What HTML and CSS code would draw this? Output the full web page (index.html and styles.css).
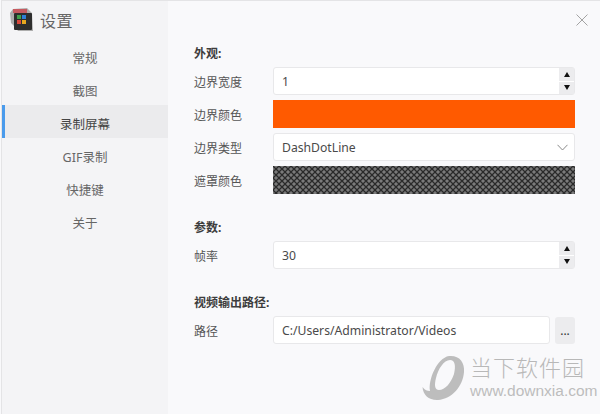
FILE: index.html
```html
<!DOCTYPE html>
<html lang="zh">
<head>
    <title>设置</title>
    <meta charset="UTF-8">
    <link rel="stylesheet" href="styles.css">
</head>
<body>
    <div class="window">
        <div class="sidebar">
            <div class="brand">
                <svg class="logo" width="24" height="24" viewBox="0 0 24 24">
                    <path d="M1 5 L4 1 L18 0 L23 5 L24 23 L9 23 L6 19 L2 15 Z" fill="#adadad"/>
                    <rect x="5" y="5" width="18" height="17" rx="1" fill="#2e2e2e"/>
                    <rect x="4" y="1" width="14" height="4" fill="#c65a60"/>
                    <rect x="8" y="7" width="4" height="4" fill="#3fa04a"/>
                    <rect x="13" y="7" width="4" height="4" fill="#2f7fd6"/>
                    <rect x="8" y="12" width="4" height="4" fill="#d8483c"/>
                    <rect x="13" y="12" width="4" height="4" fill="#e7a81f"/>
                </svg>
                <span class="brand-name">设置</span>
            </div>
            <div class="nav">
                <div class="nav-item">常规</div>
                <div class="nav-item">截图</div>
                <div class="nav-item active">录制屏幕</div>
                <div class="nav-item">GIF录制</div>
                <div class="nav-item">快捷键</div>
                <div class="nav-item">关于</div>
            </div>
        </div>
        <div class="main">
            <div class="close">
                <svg width="12" height="12" viewBox="0 0 12 12">
                    <path d="M0.5 0.500 L11.500 11.500 M11.500 0.500 L0.500 11.500" stroke="#a3a3a3" stroke-width="1" fill="none"/>
                </svg>
            </div>

            <div class="group first">
                <h6 class="group-title">外观:</h6>
                <div class="row">
                    <label class="label">边界宽度</label>
                    <div class="field">
                        <span class="value">1</span>
                        <div class="spin">
                            <span class="spin-btn"><i class="arrow up"></i></span>
                            <span class="spin-btn"><i class="arrow down"></i></span>
                        </div>
                    </div>
                </div>
                <div class="row">
                    <label class="label">边界颜色</label>
                    <div class="swatch orange"></div>
                </div>
                <div class="row">
                    <label class="label">边界类型</label>
                    <div class="field">
                        <span class="value">DashDotLine</span>
                        <svg class="chevron" width="11" height="7" viewBox="0 0 11 7">
                            <path d="M0.500 0.800 L5.500 6 L10.500 0.800" stroke="#8a8a8a" stroke-width="1" fill="none"/>
                        </svg>
                    </div>
                </div>
                <div class="row">
                    <label class="label">遮罩颜色</label>
                    <svg class="swatch" width="302" height="28">
                        <defs>
                            <pattern id="cross" width="6" height="6" patternUnits="userSpaceOnUse">
                                <rect width="6" height="6" fill="#7a7a7a"/>
                                <path d="M0 0 L6 6 M6 0 L0 6" stroke="#2a2a2a" stroke-width="1.300"/>
                            </pattern>
                        </defs>
                        <rect width="100%" height="100%" fill="url(#cross)"/>
                    </svg>
                </div>
            </div>

            <div class="group">
                <h6 class="group-title">参数:</h6>
                <div class="row">
                    <label class="label">帧率</label>
                    <div class="field">
                        <span class="value">30</span>
                        <div class="spin">
                            <span class="spin-btn"><i class="arrow up"></i></span>
                            <span class="spin-btn"><i class="arrow down"></i></span>
                        </div>
                    </div>
                </div>
            </div>

            <div class="group">
                <h6 class="group-title">视频输出路径:</h6>
                <div class="row">
                    <label class="label">路径</label>
                    <div class="field">
                        <span class="value">C:/Users/Administrator/Videos</span>
                    </div>
                    <div class="browse">...</div>
                </div>
            </div>

            <div class="watermark">
                <svg class="wm-logo" width="44" height="46" viewBox="0 0 44 46">
                    <path fill-rule="evenodd" fill="#bdbdbd" d="M27 1 C37 0 43 7 42 17 C41 31 30 44 16 45 C7 45.500 1 40 0.500 32 C3 35 5 36 8 36 C6 25 15 3 27 1 Z M28 5 C22 5 16 14 14 23 C12 31 13 35 17 35 C23 35 29 28 32 19 C34 11 33 5 28 5 Z"/>
                </svg>
                <div class="wm-text">
                    <div class="wm-name">当下软件园</div>
                    <div class="wm-url">www.downxia.com</div>
                </div>
            </div>
        </div>
    </div>
</body>
</html>
```

FILE: styles.css
```css
html, body {
    margin: 0;
    padding: 0;
}
body {
    width: 600px;
    height: 414px;
    overflow: hidden;
    background: #f9f9fb;
    font-family: "Noto Sans", "Noto Sans CJK SC", sans-serif;
    font-size: 12px;
    color: #444;
}
.window {
    display: flex;
    height: 413px;
    border-top: 1px solid #e4e4e6;
    margin-left: 1px;
    border-left: 1px solid #e4e4e6;
}
.sidebar {
    width: 166px;
    flex: none;
    background: #f4f4f6;
}
.brand {
    display: flex;
    align-items: center;
    height: 37px;
    padding-left: 7px;
}
.logo {
    margin-right: 7px;
}
.brand-name {
    font-size: 16px;
    color: #666;
    letter-spacing: 0.5px;
}
.nav {
    margin-top: 1px;
}
.nav-item {
    box-sizing: border-box;
    height: 33px;
    padding-top: 3px;
    line-height: 33px;
    text-align: center;
    font-size: 12.500px;
    color: #666;
}
.nav-item.active {
    background: #ebebed;
    color: #444;
    border-left: 3px solid #4a9bec;
    padding-right: 3px;
}
.main {
    position: relative;
    flex: 1;
    padding: 0 25px 0 26px;
}
.close {
    position: absolute;
    top: 12px;
    right: 12px;
    height: 12px;
}
.group {
    margin-top: 25px;
}
.group.first {
    margin-top: 44px;
}
.group-title {
    margin: 0 0 5px;
    font-size: 12px;
    line-height: 17px;
    font-weight: 700;
    color: #3d3d3d;
}
.row {
    display: flex;
    align-items: center;
    height: 28px;
    margin-bottom: 5px;
}
.label {
    width: 79px;
    flex: none;
    padding-top: 2px;
    font-size: 12px;
    color: #555;
}
.field {
    flex: 1;
    height: 26px;
    display: flex;
    align-items: center;
    justify-content: space-between;
    background: #fff;
    border: 1px solid #e8e8ea;
    border-radius: 3px;
}
.value {
    padding-left: 8px;
    font-size: 12.200px;
    color: #4a4a4a;
}
.spin {
    display: flex;
    flex-direction: column;
    gap: 1px;
    width: 15px;
    height: 26px;
}
.spin-btn {
    flex: 1;
    display: flex;
    align-items: center;
    justify-content: center;
    background: #ececee;
}
.arrow {
    width: 0;
    height: 0;
    border-left: 3.500px solid transparent;
    border-right: 3.500px solid transparent;
}
.arrow.up {
    border-bottom: 5px solid #111;
}
.arrow.down {
    border-top: 5px solid #111;
}
.chevron {
    margin-right: 6px;
}
.swatch {
    flex: 1;
    height: 28px;
}
.orange {
    background: #ff5a00;
}
.browse {
    flex: none;
    width: 20px;
    height: 27px;
    margin-left: 5px;
    background: #ececee;
    border-radius: 3px;
    text-align: center;
    line-height: 27px;
    font-size: 12px;
    color: #333;
}
.watermark {
    position: absolute;
    left: 254px;
    top: 353px;
    display: flex;
    align-items: center;
}
.wm-logo {
    margin-right: 4px;
}
.wm-name {
    font-size: 22px;
    font-weight: 300;
    line-height: 27px;
    color: #b8b8b8;
    letter-spacing: 1px;
    white-space: nowrap;
}
.wm-url {
    font-family: "Liberation Sans", sans-serif;
    font-size: 15.500px;
    line-height: 20px;
    color: #bdbdbd;
    white-space: nowrap;
}
```
